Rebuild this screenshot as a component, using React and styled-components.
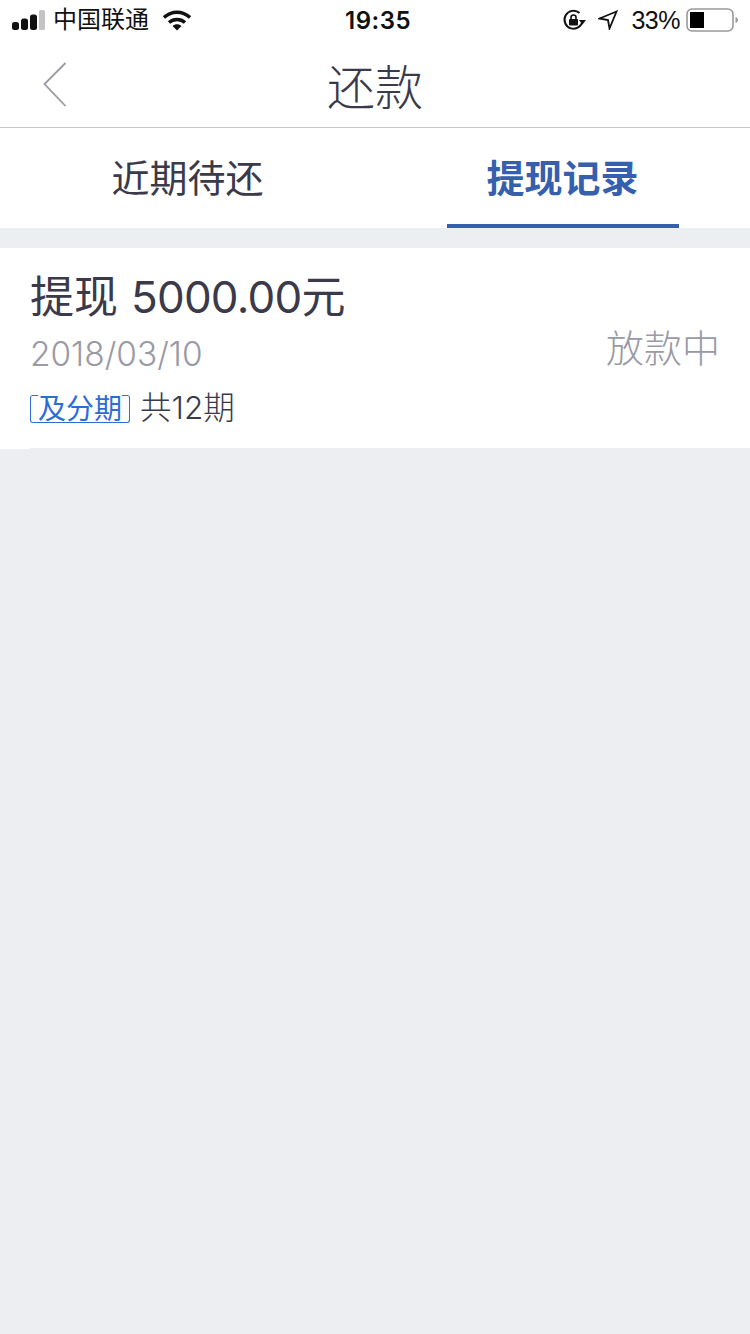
import styled, { createGlobalStyle } from 'styled-components';

const GlobalStyle = createGlobalStyle`
  html, body {
    margin: 0;
    padding: 0;
    background: #edeef2;
  }
  * {
    box-sizing: border-box;
  }
`;

const FONT = '"Inter", "Noto Sans CJK SC", sans-serif';

const Page = styled.div`
  width: 750px;
  height: 1334px;
  background: #edeef2;
  font-family: ${FONT};
  color: #3a3a4a;
  overflow: hidden;
`;

const StatusBar = styled.div`
  height: 40px;
  background: #fff;
  display: grid;
  grid-template-columns: 1fr auto 1fr;
  align-items: center;
  padding: 0 12px;
  color: #111;
`;

const StatusGroup = styled.div`
  display: flex;
  align-items: center;
  justify-content: ${(p) => (p.$end ? 'flex-end' : 'flex-start')};
`;

const Carrier = styled.span`
  font-size: 24px;
  line-height: 40px;
  margin: 0 14px 0 8px;
`;

const Clock = styled.span`
  font-size: 24px;
  font-weight: 600;
  letter-spacing: 0.5px;
  margin-left: 6px;
`;

const BatteryText = styled.span`
  font-family: "Liberation Sans", sans-serif;
  font-size: 25px;
  letter-spacing: -0.5px;
  margin: 0 6px 0 13px;
`;

const LocationWrap = styled.span`
  display: flex;
  margin-left: 12px;
`;

const NavBar = styled.div`
  position: relative;
  height: 88px;
  background: #fff;
  border-bottom: 1px solid #c9c9cd;
  display: flex;
  align-items: center;
  justify-content: center;
`;

const BackIcon = styled.svg`
  position: absolute;
  left: 43px;
  top: 22px;
`;

const NavTitle = styled.h1`
  margin: 0 0 -1px;
  font-size: 48px;
  font-weight: 300;
  color: #3a3a4a;
`;

const Tabs = styled.div`
  height: 100px;
  background: #fff;
  display: grid;
  grid-template-columns: 1fr 1fr;
`;

const Tab = styled.div`
  position: relative;
  display: flex;
  align-items: center;
  justify-content: center;
  padding-bottom: 5px;
  font-size: 38px;
  font-weight: ${(p) => (p.$active ? 700 : 400)};
  color: ${(p) => (p.$active ? '#3660ae' : '#3a3a4a')};

  ${(p) =>
    p.$active &&
    `&::after {
      content: '';
      position: absolute;
      left: 72px;
      bottom: 0;
      width: 232px;
      height: 4px;
      background: #3660ae;
    }`}
`;

const Record = styled.div`
  position: relative;
  margin-top: 20px;
  height: 200px;
  background: #fff;
  display: flex;
  align-items: center;
  justify-content: space-between;
  padding: 0 30px;

  &::after {
    content: '';
    position: absolute;
    left: 0;
    bottom: -1px;
    width: 30px;
    height: 1px;
    background: #fff;
  }
`;

const RecordInfo = styled.div`
  align-self: flex-start;
  padding-top: 23px;
  display: flex;
  flex-direction: column;
`;

const Amount = styled.div`
  font-size: 44px;
  line-height: 52px;
  display: flex;
  gap: 13px;
`;

const AmountValue = styled.span`
  letter-spacing: -0.8px;
`;

const RecordDate = styled.div`
  font-size: 33.4px;
  line-height: 40px;
  font-weight: 300;
  color: #999aa5;
  margin-top: 11px;
`;

const Terms = styled.div`
  display: flex;
  align-items: center;
  gap: 10px;
  font-size: 31.5px;
  line-height: 40px;
  margin-top: 14px;
  font-weight: 300;
`;

const Tag = styled.span`
  width: 100px;
  height: 28px;
  margin-top: 2px;
  border: 1px solid #2f6bd8;
  border-top-color: transparent;
  border-radius: 3px;
  background:
    linear-gradient(#2f6bd8, #2f6bd8) left top / 8px 1px no-repeat border-box,
    linear-gradient(#2f6bd8, #2f6bd8) right top / 8px 1px no-repeat border-box;
  color: #2f6bd8;
  font-size: 28px;
  font-weight: 400;
  line-height: 26px;
  text-align: center;
  white-space: nowrap;
`;

const RecordStatus = styled.div`
  font-size: 38px;
  font-weight: 300;
  color: #999aa5;
  margin-top: -5px;
`;

const SignalIcon = () => (
  <svg width="33" height="20" viewBox="0 0 33 20">
    <rect x="0" y="12" width="7" height="8" rx="2.5" fill="#111" />
    <rect x="9" y="8.5" width="7" height="11.5" rx="2.5" fill="#111" />
    <rect x="18" y="4.5" width="7" height="15.5" rx="2.5" fill="#111" />
    <rect x="27" y="0" width="6" height="20" rx="1.5" fill="#c4c4c4" />
  </svg>
);

const WifiIcon = () => (
  <svg width="28" height="21" viewBox="0 0 28 21" fill="none" stroke="#111" strokeWidth="3.4">
    <path d="M1 7.5C8.5 0.5 19.5 0.5 27 7.5" />
    <path d="M6 12.5C10.5 8.5 17.5 8.5 22 12.5" />
    <path d="M9.5 16L14 20.5L18.5 16C16 13.8 12 13.8 9.5 16Z" fill="#111" stroke="none" />
  </svg>
);

const LockRotationIcon = () => (
  <svg width="24" height="24" viewBox="0 0 24 24" fill="none">
    <path d="M20.5 12.5A9 9 0 1 1 17.5 5" stroke="#111" strokeWidth="2" />
    <path d="M17 12L24 12L20.5 16.5Z" fill="#111" />
    <rect x="7" y="11" width="9" height="6.5" rx="1" fill="#111" />
    <path d="M9 11.5V9.5a2.5 2.5 0 0 1 5 0V11.5" stroke="#111" strokeWidth="1.6" />
  </svg>
);

const LocationIcon = () => (
  <svg width="20" height="20" viewBox="0 0 20 20" fill="none" stroke="#111" strokeWidth="1.8" strokeLinejoin="miter">
    <path d="M18.5 1.5L1.5 8.5L10 10L11.5 18.5Z" />
  </svg>
);

const BatteryIcon = () => (
  <svg width="52" height="24" viewBox="0 0 52 24">
    <rect x="1" y="1" width="46" height="22" rx="5" fill="none" stroke="#999" strokeWidth="1.6" />
    <rect x="4" y="4" width="14" height="16" fill="#000" />
    <path d="M49.5 9C51 9.5 52 10.5 52 12C52 13.5 51 14.5 49.5 15Z" fill="#999" />
  </svg>
);

const App = () => {
  return (
    <>
      <GlobalStyle />
      <Page>
        <StatusBar>
          <StatusGroup>
            <SignalIcon />
            <Carrier>中国联通</Carrier>
            <WifiIcon />
          </StatusGroup>
          <Clock>19:35</Clock>
          <StatusGroup $end>
            <LockRotationIcon />
            <LocationWrap>
              <LocationIcon />
            </LocationWrap>
            <BatteryText>33%</BatteryText>
            <BatteryIcon />
          </StatusGroup>
        </StatusBar>
        <NavBar>
          <BackIcon width="24" height="46" viewBox="0 0 24 46" fill="none" stroke="#9a9aa0" strokeWidth="1.8">
            <path d="M22.5 1L1.5 22L22.5 44" />
          </BackIcon>
          <NavTitle>还款</NavTitle>
        </NavBar>
        <Tabs>
          <Tab>近期待还</Tab>
          <Tab $active>提现记录</Tab>
        </Tabs>
        <Record>
          <RecordInfo>
            <Amount>
              <span>提现</span>
              <AmountValue>5000.00元</AmountValue>
            </Amount>
            <RecordDate>2018/03/10</RecordDate>
            <Terms>
              <Tag>及分期</Tag>
              <span>共12期</span>
            </Terms>
          </RecordInfo>
          <RecordStatus>放款中</RecordStatus>
        </Record>
      </Page>
    </>
  );
};

export default App;
